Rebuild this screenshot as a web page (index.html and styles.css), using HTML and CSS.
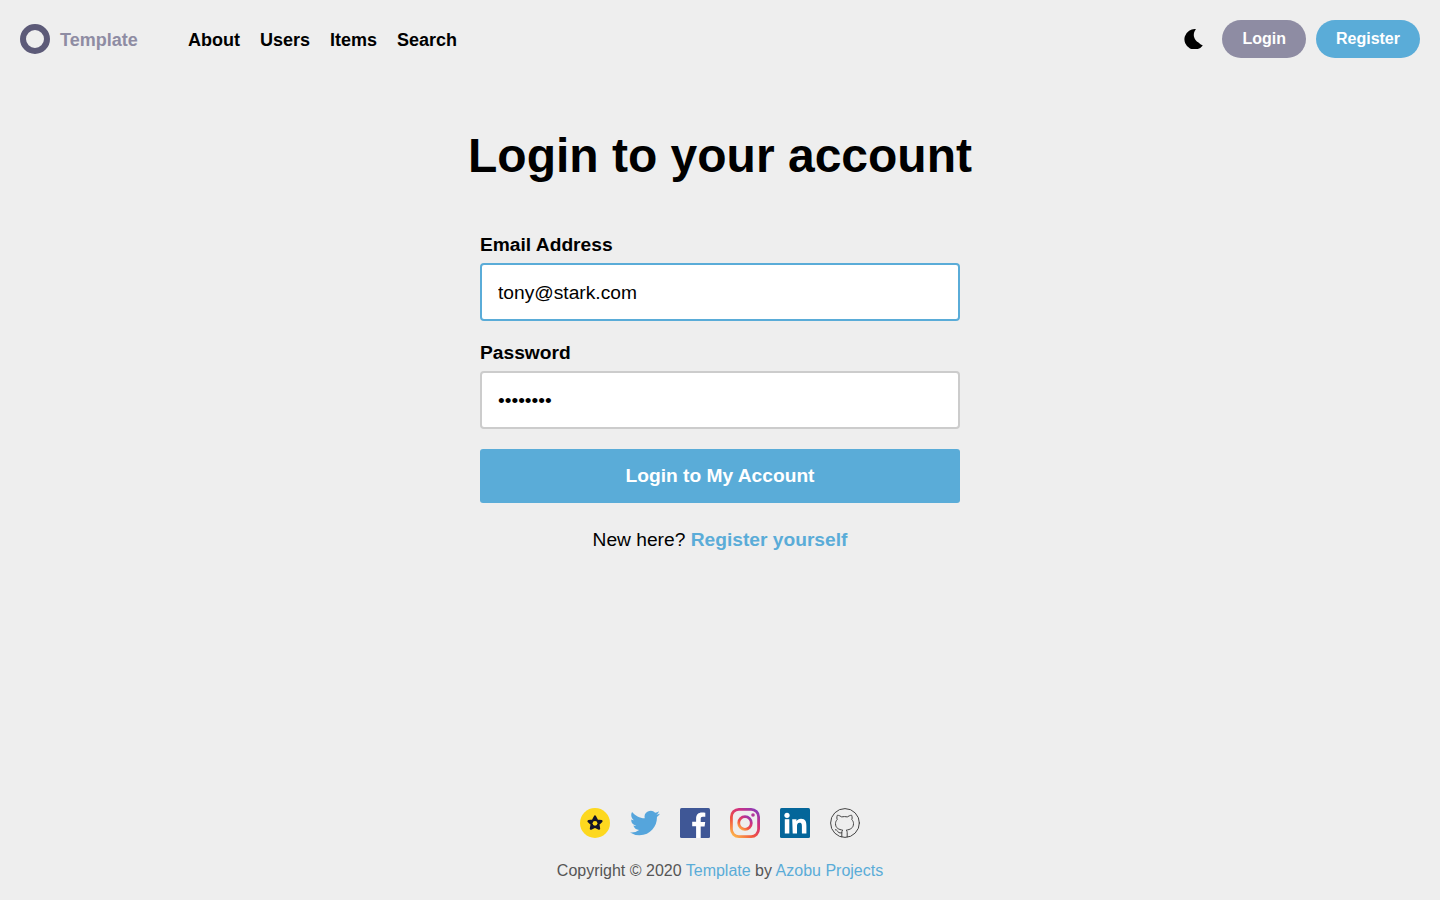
FILE: index.html
```html
<!DOCTYPE html>
<html lang="en">
<head>
  <meta charset="UTF-8" />
  <meta name="viewport" content="width=device-width, initial-scale=1.0" />
  <title>Login</title>
  <link rel="stylesheet" href="styles.css">
</head>
<body>
  <header class="navbar">
    <a class="brand" href="#">
      <span class="brand-ring"></span>
      <span class="brand-name">Template</span>
    </a>
    <nav class="nav-links">
      <a href="#">About</a>
      <a href="#">Users</a>
      <a href="#">Items</a>
      <a href="#">Search</a>
    </nav>
    <div class="nav-actions">
      <svg class="moon" viewBox="0 0 20 20" width="20" height="20" aria-hidden="true">
        <path d="M13 0.200 A10.200 10.200 0 1 0 19.800 16.400 A9.500 9.500 0 0 1 15.500 13.500 A8.500 8.500 0 0 1 13 0.200 Z" fill="#000"/>
      </svg>
      <a class="pill pill-grey" href="#">Login</a>
      <a class="pill pill-blue" href="#">Register</a>
    </div>
  </header>

  <main class="content">
    <h1>Login to your account</h1>
    <form class="login-form">
      <label for="email">Email Address</label>
      <input id="email" class="field field-active" type="text" value="tony@stark.com" />
      <label for="password">Password</label>
      <input id="password" class="field" type="password" value="password" />
      <button class="submit" type="button">Login to My Account</button>
    </form>
    <p class="switch">New here? <a href="#">Register yourself</a></p>
  </main>

  <footer class="footer">
    <div class="socials">
      <a href="#" aria-label="Product Hunt">
        <svg viewBox="0 0 30 30" width="30" height="30">
          <circle cx="15" cy="15" r="15" fill="#fdd81f"/>
          <path d="M15 8.500l2.100 4 4.400.7-3.100 3.100.7 4.400-4.100-2-4.100 2 .7-4.400-3.100-3.100 4.400-.7z" fill="#14142b" stroke="#14142b" stroke-width="2.200" stroke-linejoin="round"/>
          <circle cx="15" cy="15.300" r="2.400" fill="#fdd81f"/>
        </svg>
      </a>
      <a href="#" aria-label="Twitter">
        <svg viewBox="0 0 24 24" width="30" height="30">
          <path d="M23.95 4.57a10 10 0 0 1-2.82.77 4.96 4.96 0 0 0 2.16-2.72c-.95.55-2 .96-3.13 1.19a4.92 4.92 0 0 0-8.38 4.48C7.69 8.1 4.07 6.13 1.64 3.16a4.82 4.82 0 0 0-.67 2.48c0 1.71.87 3.21 2.19 4.1a4.9 4.9 0 0 1-2.23-.62v.06a4.92 4.92 0 0 0 3.95 4.83 5 5 0 0 1-2.21.08 4.94 4.94 0 0 0 4.6 3.42A9.87 9.87 0 0 1 0 19.54a14 14 0 0 0 7.56 2.21c9.05 0 14-7.5 14-13.98 0-.21 0-.42-.02-.63a9.94 9.94 0 0 0 2.46-2.55z" fill="#55a5dc"/>
        </svg>
      </a>
      <a href="#" aria-label="Facebook">
        <svg viewBox="0 0 30 30" width="30" height="30">
          <rect width="30" height="30" rx="1.500" fill="#3f5796"/>
          <path d="M20.700 30V18.400h3.900l.6-4.500h-4.500v-2.900c0-1.300.4-2.200 2.200-2.200h2.400v-4c-.4-.1-1.800-.2-3.400-.2-3.400 0-5.800 2.100-5.800 5.900v3.300h-3.900v4.500h3.900V30z" fill="#fff"/>
        </svg>
      </a>
      <a href="#" aria-label="Instagram">
        <svg viewBox="0 0 30 30" width="30" height="30">
          <defs>
            <linearGradient id="insta" x1="0.1" y1="1" x2="0.9" y2="0">
              <stop offset="0" stop-color="#fdb44b"/>
              <stop offset="0.35" stop-color="#f1543f"/>
              <stop offset="0.7" stop-color="#d0307f"/>
              <stop offset="1" stop-color="#8a3ab9"/>
            </linearGradient>
          </defs>
          <rect x="1.400" y="1.400" width="27.200" height="27.200" rx="7.500" fill="none" stroke="url(#insta)" stroke-width="2.800"/>
          <circle cx="15" cy="15" r="6.300" fill="none" stroke="url(#insta)" stroke-width="2.800"/>
          <circle cx="23" cy="7" r="1.800" fill="#b5369b"/>
        </svg>
      </a>
      <a href="#" aria-label="LinkedIn">
        <svg viewBox="0 0 30 30" width="30" height="30">
          <rect width="30" height="30" rx="1.500" fill="#04669a"/>
          <circle cx="7" cy="7.300" r="2.600" fill="#fff"/>
          <rect x="4.800" y="11.200" width="4.500" height="14.300" fill="#fff"/>
          <path d="M12.200 11.200h4.300v2c.7-1.300 2.300-2.400 4.500-2.400 4.600 0 5.400 3 5.400 6.900v7.800h-4.500v-6.900c0-1.700 0-3.800-2.300-3.800s-2.600 1.800-2.600 3.700v7h-4.300z" fill="#fff"/>
        </svg>
      </a>
      <a href="#" aria-label="GitHub">
        <svg viewBox="0 0 30 30" width="30" height="30" fill="none" stroke="#444" stroke-width="1" stroke-linejoin="round" stroke-linecap="round">
          <circle cx="15" cy="15" r="14.400"/>
          <path d="M11.800 28.900v-4.300c0-1 .3-1.900.9-2.500-3.900-.5-7.200-2-7.200-6.500 0-1.500.6-2.900 1.700-4-.3-.5-.6-2.300.1-4.300 0 0 1.500-.3 4.400 1.600a12 12 0 0 1 5.600 0c2.900-1.900 4.400-1.600 4.400-1.600.7 2 .4 3.800.1 4.300 1.100 1.100 1.700 2.500 1.700 4 0 4.500-3.300 6-7.200 6.500.6.600.9 1.500.9 2.500v4.300"/>
          <path d="M11.800 24.800c-2.900.8-3.900-.9-4.500-2-.4-.7-1.200-1.100-1.900-1.100"/>
        </svg>
      </a>
    </div>
    <p class="copyright">Copyright © 2020 <a href="#">Template</a> by <a href="#">Azobu Projects</a></p>
  </footer>
</body>
</html>
```

FILE: styles.css
```css
:root {
  --blue: #5aacd8;
  --grey: #8e8ca3;
  --dark-ring: #5c5a78;
  --page-bg: #eeeeee;
}

* {
  box-sizing: border-box;
}

html,
body {
  height: 100%;
}

body {
  margin: 0;
  display: flex;
  flex-direction: column;
  background: var(--page-bg);
  color: #000;
  font-family: "Liberation Sans", Arial, sans-serif;
  font-size: 19.2px;
}

a {
  text-decoration: none;
  color: inherit;
}

.navbar {
  display: flex;
  align-items: center;
  height: 78px;
  padding: 0 20px;
}

.brand {
  display: flex;
  align-items: center;
  gap: 10px;
  width: 168px;
}

.brand-ring {
  width: 30px;
  height: 30px;
  border: 6px solid var(--dark-ring);
  border-radius: 50%;
}

.brand-name {
  margin-top: 2px;
  font-size: 18px;
  font-weight: bold;
  color: var(--grey);
}

.nav-links {
  display: flex;
  gap: 20px;
  margin-top: 2px;
  font-size: 18px;
  font-weight: bold;
}

.nav-actions {
  display: flex;
  align-items: center;
  margin-left: auto;
}

.moon {
  margin-right: 19px;
}

.pill {
  display: flex;
  align-items: center;
  height: 38px;
  padding: 0 20px;
  margin-left: 10px;
  border-radius: 19px;
  color: #fff;
  font-size: 16px;
  font-weight: bold;
}

.moon + .pill {
  margin-left: 0;
}

.pill-grey {
  background: var(--grey);
}

.pill-blue {
  background: var(--blue);
}

.content {
  flex: 1;
  display: flex;
  flex-direction: column;
  align-items: center;
}

h1 {
  margin: 49px 0 0;
  font-size: 48px;
  line-height: 58px;
  font-weight: bold;
}

.login-form {
  display: flex;
  flex-direction: column;
  width: 480px;
  margin-top: 48px;
}

label {
  font-size: 19.2px;
  line-height: 23px;
  font-weight: bold;
  margin-bottom: 7px;
}

.field {
  height: 58px;
  padding: 2px 16px 0;
  margin-bottom: 20px;
  background: #fff;
  border: 2px solid #cccccc;
  border-radius: 4px;
  font-family: inherit;
  font-size: 19.2px;
  color: #000;
  outline: none;
}

.field-active {
  border-color: var(--blue);
}

.submit {
  height: 54px;
  border: 0;
  border-radius: 3px;
  background: var(--blue);
  color: #fff;
  font-family: inherit;
  font-size: 19.2px;
  font-weight: bold;
}

.switch {
  margin: 24px 0 0;
  line-height: 26px;
}

.switch a {
  color: var(--blue);
  font-weight: bold;
}

.footer {
  display: flex;
  flex-direction: column;
  align-items: center;
  padding-bottom: 19px;
}

.socials {
  display: flex;
  gap: 20px;
}

.socials a {
  display: block;
  height: 30px;
}

.copyright {
  margin: 23px 0 0;
  font-size: 16px;
  line-height: 20px;
  color: #555;
}

.copyright a {
  color: var(--blue);
}
```
